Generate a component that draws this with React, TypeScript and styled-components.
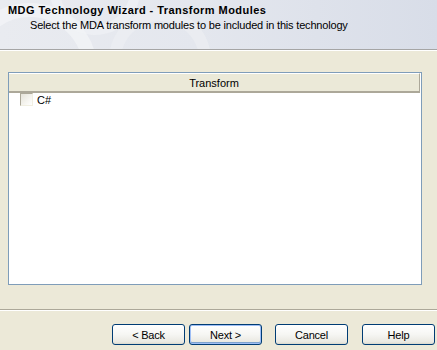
import React from "react";
import styled, { createGlobalStyle } from "styled-components";

const Global = createGlobalStyle`
  html, body { margin: 0; padding: 0; background: #ECE9D8; }
  body { font-family: Tahoma, "Liberation Sans", Arial, sans-serif; font-size: 11px; color: #000; }
`;

const Window = styled.div`
  width: 437px;
  height: 350px;
  background: #ECE9D8;
  display: flex;
  flex-direction: column;
  overflow: hidden;
`;

const Header = styled.div`
  position: relative;
  height: 49px;
  flex: none;
  background: linear-gradient(90deg, #E9EBF0 0%, #E4E7EE 45%, #D8DDE8 100%);
  border-bottom: 1px solid #A5A5A5;
  box-shadow: 0 1px 0 #FFFFFF;
  overflow: hidden;
`;

const Swirl = styled.svg`
  position: absolute;
  left: 0;
  top: 0;
`;

const HeaderText = styled.div`
  position: relative;
  padding: 4px 0 0 8px;
  display: flex;
  flex-direction: column;
  gap: 2px;
`;

const Title = styled.div`
  font-weight: bold;
  font-size: 11px;
  line-height: 13px;
  letter-spacing: 0.45px;
`;

const Subtitle = styled.div`
  padding-left: 22px;
  font-size: 11px;
  line-height: 13px;
  letter-spacing: -0.18px;
`;

const Content = styled.div`
  flex: none;
  margin: 22px 15px 0 8px;
  height: 213px;
  box-sizing: border-box;
  border: 1px solid #7F9DB9;
  background: #FFFFFF;
  display: flex;
  flex-direction: column;
`;

const ColumnHeader = styled.div`
  height: 20px;
  box-sizing: border-box;
  margin-right: 1px;
  border-top: 1px solid #FFFFFF;
  border-right: 1px solid #ACA899;
  border-bottom: 2px solid #ACA899;
  background: #EBE9D8;
  display: flex;
  align-items: center;
  justify-content: center;
  font-size: 11px;
`;

const Row = styled.label`
  display: flex;
  align-items: center;
  height: 13px;
  padding-left: 11px;
  gap: 4px;
`;

const Check = styled.span`
  width: 13px;
  height: 13px;
  box-sizing: border-box;
  border-top: 1px solid #ACA899;
  border-left: 1px solid #ACA899;
  border-right: 1px solid #F1EFE2;
  border-bottom: 1px solid #F1EFE2;
  background: linear-gradient(135deg, #E5E3D9 0%, #F6F5F0 60%, #FFFFFF 100%);
`;

const Separator = styled.div`
  flex: none;
  margin-top: 24px;
  height: 1px;
  background: #ACA899;
  box-shadow: 0 1px 0 #FFFFFF;
`;

const ButtonRow = styled.div`
  flex: none;
  margin-top: 14px;
  display: flex;
  padding-left: 112px;
`;

const Button = styled.button<{ $default?: boolean; $gap?: number }>`
  width: 73px;
  height: 21px;
  margin-left: ${(p) => p.$gap ?? 0}px;
  box-sizing: border-box;
  border: 1px solid #003C74;
  border-radius: 3px;
  background: linear-gradient(180deg, #FFFFFF 0%, #F6F6F3 50%, #E9E8E1 90%, #D9D7CC 100%);
  box-shadow: ${(p) =>
    p.$default
      ? "inset 0 0 0 1px #9EBEF5, inset 0 -1px 0 1px #7DA2CE"
      : "none"};
  font-family: Tahoma, "Liberation Sans", Arial, sans-serif;
  font-size: 11px;
  letter-spacing: -0.2px;
  color: #000;
  padding: 0;
  display: flex;
  align-items: center;
  justify-content: center;
`;

export default function App() {
  return (
    <>
      <Global />
      <Window>
        <Header>
          <Swirl width="437" height="49" viewBox="0 0 437 49">
            <circle cx="30" cy="70" r="60" fill="none" stroke="#F4F5F8" strokeWidth="14" opacity="0.7" />
            <circle cx="95" cy="-10" r="40" fill="none" stroke="#F1F3F6" strokeWidth="10" opacity="0.6" />
            <circle cx="160" cy="60" r="45" fill="none" stroke="#EEF0F4" strokeWidth="12" opacity="0.6" />
          </Swirl>
          <HeaderText>
            <Title>MDG Technology Wizard - Transform Modules</Title>
            <Subtitle>Select the MDA transform modules to be included in this technology</Subtitle>
          </HeaderText>
        </Header>
        <Content>
          <ColumnHeader>Transform</ColumnHeader>
          <Row>
            <Check />
            <span>C#</span>
          </Row>
        </Content>
        <Separator />
        <ButtonRow>
          <Button>&lt; Back</Button>
          <Button $default $gap={4}>Next &gt;</Button>
          <Button $gap={13}>Cancel</Button>
          <Button $gap={14}>Help</Button>
        </ButtonRow>
      </Window>
    </>
  );
}
